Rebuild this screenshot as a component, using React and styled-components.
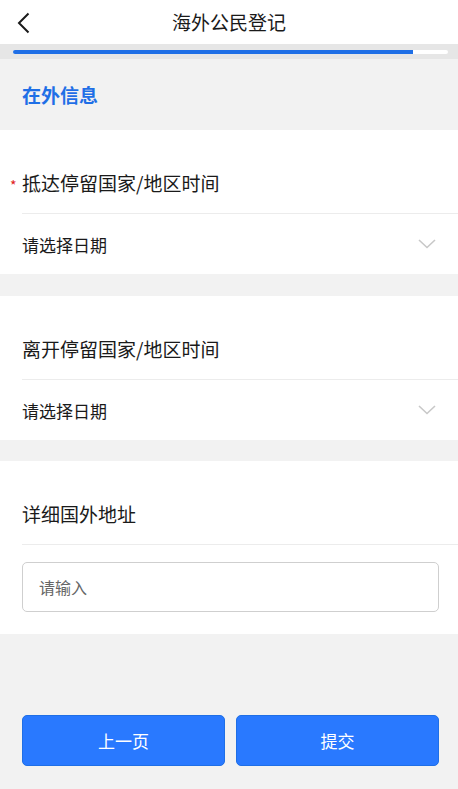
import React from "react";
import styled, { createGlobalStyle } from "styled-components";

const GlobalStyle = createGlobalStyle`
  html, body {
    margin: 0;
    padding: 0;
    background: #f2f2f2;
  }
  * {
    box-sizing: border-box;
  }
  body {
    font-family: "Noto Sans CJK SC", "Noto Sans", sans-serif;
    color: #1a1a1a;
  }
`;

const Page = styled.div`
  width: 458px;
  min-height: 789px;
  display: flex;
  flex-direction: column;
  background: #f2f2f2;
`;

const NavBar = styled.div`
  height: 44px;
  background: white;
  display: flex;
  align-items: center;
  justify-content: center;
  position: relative;
`;

const BackButton = styled.div`
  position: absolute;
  left: 15px;
  top: 11px;
  width: 16px;
  height: 24px;
  display: flex;
  align-items: center;
  justify-content: center;
`;

const Title = styled.h1`
  margin: 0;
  font-size: 19px;
  font-weight: 400;
  line-height: 44px;
  color: #1a1a1a;
`;

const ProgressBand = styled.div`
  height: 15px;
  background: #e6e6e6;
  padding: 6px 10px 5px 13px;
`;

const Track = styled.div`
  height: 4px;
  background: white;
  border-radius: 2px;
  overflow: hidden;
`;

const Fill = styled.div`
  height: 100%;
  background: #1f6fe6;
`;

const SectionHeader = styled.div`
  height: 71px;
  padding: 0 22px;
  display: flex;
  align-items: center;
  font-size: 19px;
  font-weight: 700;
  color: #1f6fe6;
`;

const Card = styled.div`
  background: white;
  padding-left: 22px;
  margin-bottom: ${({ $gap }) => $gap || 0}px;
`;

const LabelRow = styled.div`
  padding: 40px 0 17px;
  font-size: 19px;
  line-height: 26px;
  color: #1a1a1a;
  position: relative;
  border-bottom: 1px solid #ececec;
`;

const Required = styled.span`
  position: absolute;
  left: -12px;
  top: 42px;
  color: #e02020;
  font-size: 14px;
`;

const SelectRow = styled.div`
  height: 60px;
  display: flex;
  align-items: center;
  justify-content: space-between;
  padding-right: 22px;
  font-size: 17px;
  color: #1a1a1a;
`;

const InputWrap = styled.div`
  padding: 17px 19px 22px 0;
`;

const Input = styled.div`
  height: 50px;
  border: 1px solid #cfcfcf;
  border-radius: 5px;
  display: flex;
  align-items: center;
  padding-left: 16px;
  font-size: 16px;
  color: #666;
`;

const Footer = styled.div`
  flex: 1;
  display: flex;
  align-items: flex-end;
  gap: 11px;
  padding: 81px 19px 23px 22px;
`;

const Button = styled.button`
  flex: 1;
  height: 51px;
  border: 1px solid #1f6fe6;
  border-radius: 5px;
  background: #2979ff;
  color: white;
  font-family: inherit;
  font-size: 17px;
  cursor: pointer;
`;

function Chevron() {
  return (
    <svg width="18" height="10" viewBox="0 0 18 10">
      <path d="M1 1 L9 8.5 L17 1" fill="none" stroke="#c8c8c8" strokeWidth="1.6" />
    </svg>
  );
}

function DateField({ label, required, gap }) {
  return (
    <Card $gap={gap}>
      <LabelRow>
        {required && <Required>*</Required>}
        {label}
      </LabelRow>
      <SelectRow>
        请选择日期
        <Chevron />
      </SelectRow>
    </Card>
  );
}

export default function App() {
  const progress = 92;

  return (
    <Page>
      <GlobalStyle />
      <NavBar>
        <BackButton>
          <svg width="13" height="22" viewBox="0 0 13 22">
            <path d="M11.5 1.5 L2 11 L11.5 20.5" fill="none" stroke="#1a1a1a" strokeWidth="2" />
          </svg>
        </BackButton>
        <Title>海外公民登记</Title>
      </NavBar>
      <ProgressBand>
        <Track>
          <Fill style={{ width: `${progress}%` }} />
        </Track>
      </ProgressBand>
      <SectionHeader>在外信息</SectionHeader>
      <DateField label="抵达停留国家/地区时间" required gap={22} />
      <DateField label="离开停留国家/地区时间" gap={21} />
      <Card>
        <LabelRow>详细国外地址</LabelRow>
        <InputWrap>
          <Input>请输入</Input>
        </InputWrap>
      </Card>
      <Footer>
        <Button type="button">上一页</Button>
        <Button type="button">提交</Button>
      </Footer>
    </Page>
  );
}
